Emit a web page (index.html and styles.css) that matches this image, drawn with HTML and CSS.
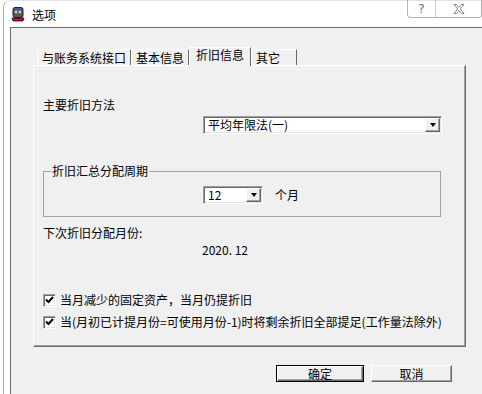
FILE: index.html
```html
<!DOCTYPE html>
<html lang="zh-CN">
<head>
  <meta charset="UTF-8">
  <title>选项</title>
  <link rel="stylesheet" href="styles.css">
</head>
<body>

  <div class="frame">
    <div class="titlebar">
      <svg class="app-icon" width="14" height="15" viewBox="0 0 14 15">
        <rect x="2" y="0.5" width="10" height="10" rx="2" fill="#5a5a5a" stroke="#222"/>
        <rect x="3.5" y="3" width="7" height="4" fill="#3d6fe0"/>
        <rect x="4" y="4" width="2" height="2" fill="#ffe040"/>
        <rect x="8" y="4" width="2" height="2" fill="#ffe040"/>
        <path d="M1 11 h12 l-1 3 h-10 z" fill="#c8102e" stroke="#111" stroke-width="0.8"/>
      </svg>
      <span class="title">选项</span>
      <div class="caption-btns">
        <span class="cap help">?</span>
        <span class="cap close">
          <svg width="12" height="10" viewBox="0 0 12 10">
            <path d="M1 0.5 h2.5 l2.5 3 l2.5 -3 h2.5 l-3.7 4.5 l3.7 4.5 h-2.5 l-2.5 -3 l-2.5 3 h-2.5 l3.7 -4.5 z" fill="#fff" stroke="#777" stroke-width="0.9"/>
          </svg>
        </span>
      </div>
    </div>

    <div class="client">
      <div class="tabs">
        <div class="tab">与账务系统接口</div>
        <div class="tab">基本信息</div>
        <div class="tab active">折旧信息</div>
        <div class="tab last">其它</div>
      </div>

      <div class="panel">
        <div class="label">主要折旧方法</div>
        <div class="combo wide">
          <span class="combo-text">平均年限法(一)</span>
          <span class="arrow"></span>
        </div>

        <fieldset class="group">
          <legend>折旧汇总分配周期</legend>
          <div class="period-row">
            <div class="combo small">
              <span class="combo-text">12</span>
              <span class="arrow"></span>
            </div>
            <span>个月</span>
          </div>
        </fieldset>

        <div class="label next-label">下次折旧分配月份:</div>
        <div class="value">2020. 12</div>

        <div class="check first">
          <span class="box"><svg width="9" height="8" viewBox="0 0 9 8"><polyline points="1,3.5 3.5,6 8,1" fill="none" stroke="#000" stroke-width="2"/></svg></span>
          <span>当月减少的固定资产，当月仍提折旧</span>
        </div>
        <div class="check">
          <span class="box"><svg width="9" height="8" viewBox="0 0 9 8"><polyline points="1,3.5 3.5,6 8,1" fill="none" stroke="#000" stroke-width="2"/></svg></span>
          <span>当(月初已计提月份=可使用月份-1)时将剩余折旧全部提足(工作量法除外)</span>
        </div>
      </div>

      <div class="buttons">
        <button class="btn default">确定</button>
        <button class="btn">取消</button>
      </div>
    </div>
  </div>

</body>
</html>
```

FILE: styles.css
```css
html, body {
  margin: 0;
  height: 100%;
  background: #ffffff;
  overflow: hidden;
}

body {
  font-family: "Noto Sans CJK SC", "DejaVu Sans", sans-serif;
  font-size: 12px;
  line-height: 14px;
  color: #000;
}

.frame {
  margin-left: 3px;
  height: 100%;
  box-sizing: border-box;
  border-left: 1px solid #b0b0b0;
  border-top: 1px solid #e4e4e4;
  border-top-left-radius: 7px;
  display: flex;
  flex-direction: column;
}

/* title bar */
.titlebar {
  height: 26px;
  display: flex;
  align-items: center;
  flex-shrink: 0;
}

.app-icon {
  margin-left: 7px;
  margin-top: 1px;
}

.title {
  margin-left: 7px;
  margin-top: 1px;
}

.caption-btns {
  margin-left: auto;
  align-self: flex-start;
  margin-top: -1px;
  display: flex;
  height: 17px;
  border: 1px solid #b4b4b4;
  border-top: none;
  border-radius: 0 0 4px 4px;
}

.cap {
  display: flex;
  align-items: center;
  justify-content: center;
  color: #6a6a6a;
  font-family: "DejaVu Sans", sans-serif;
  font-size: 12px;
}

.help {
  width: 27px;
  border-right: 1px solid #c8c8c8;
}

.close {
  width: 45px;
}

/* client area */
.client {
  flex: 1;
  margin-left: 6px;
  background: #f0f0f0;
  border-top: 1px solid #6e6e6e;
  border-left: 1px solid #6e6e6e;
  padding: 20px 0 0 22px;
}

.tabs {
  display: flex;
  align-items: flex-end;
  padding-left: 4px;
  height: 17px;
  position: relative;
  z-index: 1;
}

.tab {
  height: 15px;
  padding: 0 4px;
  line-height: 15px;
  border: 1px solid;
  border-color: #ffffff #696969 transparent #ffffff;
  border-bottom: none;
  white-space: nowrap;
}

.tab.active {
  height: 18px;
  margin-bottom: -1px;
  padding: 0 6px;
  line-height: 14px;
  background: #f0f0f0;
}

.tab.last {
  width: 36px;
}

.panel {
  width: 433px;
  box-sizing: border-box;
  border: 1px solid;
  border-color: #ffffff #696969 #696969 #ffffff;
  box-shadow: inset -1px -1px 0 #a0a0a0;
  padding: 32px 0 17px 9px;
}

.combo {
  display: flex;
  height: 18px;
  box-sizing: border-box;
  background: #ffffff;
  border: 1px solid;
  border-color: #a0a0a0 #ffffff #ffffff #a0a0a0;
  box-shadow: inset 1px 1px 0 #696969, inset -1px -1px 0 #e3e3e3;
  padding: 1px;
}

.combo-text {
  flex: 1;
  padding-left: 3px;
  line-height: 14px;
}

.arrow {
  width: 15px;
  box-sizing: border-box;
  background: #f0f0f0;
  border: 1px solid;
  border-color: #ffffff #696969 #696969 #ffffff;
  box-shadow: inset -1px -1px 0 #a0a0a0;
  display: flex;
  align-items: center;
  justify-content: center;
}

.arrow::after {
  content: "";
  width: 0;
  height: 0;
  border-left: 3.5px solid transparent;
  border-right: 3.5px solid transparent;
  border-top: 4px solid #000;
}

.combo.wide {
  width: 239px;
  margin: 4px 0 0 160px;
}

.combo.small {
  width: 60px;
}

.group {
  margin: 30px 0 0 0;
  width: 398px;
  box-sizing: border-box;
  padding: 0 0 12px 0;
  border: 1px solid #a0a0a0;
  min-width: 0;
}

.group legend {
  margin-left: 7px;
  padding: 0 1px 0 1px;
  line-height: 14px;
}

.period-row {
  display: flex;
  align-items: center;
  gap: 12px;
  margin: 8px 0 0 159px;
}

.next-label {
  margin-top: 9px;
}

.value {
  margin: 3px 0 0 159px;
}

.check {
  display: flex;
  align-items: center;
  gap: 4px;
  margin-top: 8px;
  white-space: nowrap;
}

.check.first {
  margin-top: 36px;
}

.box {
  width: 13px;
  height: 13px;
  box-sizing: border-box;
  background: #ffffff;
  border: 1px solid;
  border-color: #a0a0a0 #ffffff #ffffff #a0a0a0;
  box-shadow: inset 1px 1px 0 #696969, inset -1px -1px 0 #e3e3e3;
  display: flex;
  align-items: center;
  justify-content: center;
}

.buttons {
  display: flex;
  justify-content: flex-end;
  gap: 7px;
  margin-top: 18px;
  padding-right: 30px;
}

.btn {
  font: inherit;
  height: 17px;
  width: 81px;
  padding: 0;
  line-height: 13px;
  background: #f0f0f0;
  border: 1px solid;
  border-color: #ffffff #696969 #696969 #ffffff;
  box-shadow: inset -1px -1px 0 #a0a0a0;
  color: #000;
}

.btn.default {
  width: 88px;
  border-color: #000;
  box-shadow: inset 1px 1px 0 #ffffff, inset -1px -1px 0 #696969, inset -2px -2px 0 #a0a0a0;
}
```
